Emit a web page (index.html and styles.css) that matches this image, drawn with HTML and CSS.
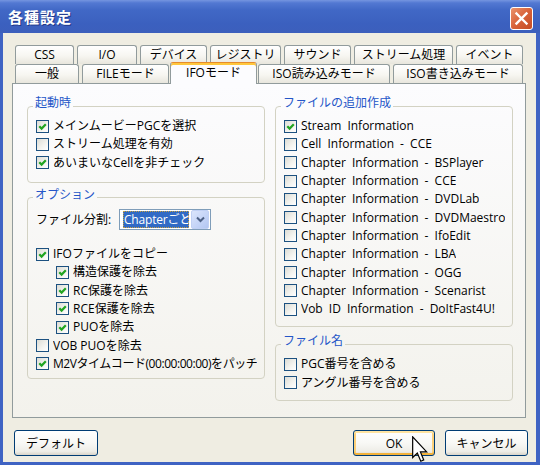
FILE: index.html
```html
<!DOCTYPE html>
<html lang="ja">
<head>
<meta charset="utf-8">
<link rel="stylesheet" href="styles.css">
</head>
<body>
<div class="window">
  <div class="titlebar">
    <span class="title">各種設定</span>
    <span class="close"><svg width="15" height="15" viewBox="0 0 15 15"><path d="M2.5 2.5 L12.5 12.5 M12.5 2.5 L2.5 12.5" stroke="#fff" stroke-width="2.4" stroke-linecap="square"/></svg></span>
  </div>
  <div class="client">
    <div class="tabs">
      <div class="tabrow row1">
        <div class="tab">CSS</div>
        <div class="tab">I/O</div>
        <div class="tab">デバイス</div>
        <div class="tab">レジストリ</div>
        <div class="tab">サウンド</div>
        <div class="tab">ストリーム処理</div>
        <div class="tab">イベント</div>
      </div>
      <div class="tabrow row2">
        <div class="tab">一般</div>
        <div class="tab">FILEモード</div>
        <div class="tab active">IFOモード</div>
        <div class="tab">ISO読み込みモード</div>
        <div class="tab">ISO書き込みモード</div>
      </div>
    </div>
    <div class="panel">
      <div class="col">
        <fieldset class="group g-start">
          <legend>起動時</legend>
          <div class="cb"><span class="box on"><svg viewBox="0 0 11 11"><path d="M2.3 5.2 L4.6 7.6 L8.8 3.2" /></svg></span><span class="txt">メインムービーPGCを選択</span></div>
          <div class="cb"><span class="box"></span><span class="txt">ストリーム処理を有効</span></div>
          <div class="cb"><span class="box on"><svg viewBox="0 0 11 11"><path d="M2.3 5.2 L4.6 7.6 L8.8 3.2" /></svg></span><span class="txt">あいまいなCellを非チェック</span></div>
        </fieldset>
        <fieldset class="group g-option">
          <legend>オプション</legend>
          <div class="split-row">
            <span class="split-label">ファイル分割:</span>
            <div class="combo">
              <span class="combo-sel">Chapterごと</span>
              <span class="combo-btn"><svg width="9" height="7" viewBox="0 0 9 7"><path d="M1 1.5 L4.5 5 L8 1.5" fill="none" stroke="#4d6185" stroke-width="2"/></svg></span>
            </div>
          </div>
          <div class="cb"><span class="box on"><svg viewBox="0 0 11 11"><path d="M2.3 5.2 L4.6 7.6 L8.8 3.2" /></svg></span><span class="txt">IFOファイルをコピー</span></div>
          <div class="cb sub"><span class="box on"><svg viewBox="0 0 11 11"><path d="M2.3 5.2 L4.6 7.6 L8.8 3.2" /></svg></span><span class="txt">構造保護を除去</span></div>
          <div class="cb sub"><span class="box on"><svg viewBox="0 0 11 11"><path d="M2.3 5.2 L4.6 7.6 L8.8 3.2" /></svg></span><span class="txt">RC保護を除去</span></div>
          <div class="cb sub"><span class="box on"><svg viewBox="0 0 11 11"><path d="M2.3 5.2 L4.6 7.6 L8.8 3.2" /></svg></span><span class="txt">RCE保護を除去</span></div>
          <div class="cb sub"><span class="box on"><svg viewBox="0 0 11 11"><path d="M2.3 5.2 L4.6 7.6 L8.8 3.2" /></svg></span><span class="txt">PUOを除去</span></div>
          <div class="cb"><span class="box"></span><span class="txt">VOB PUOを除去</span></div>
          <div class="cb"><span class="box on"><svg viewBox="0 0 11 11"><path d="M2.3 5.2 L4.6 7.6 L8.8 3.2" /></svg></span><span class="txt tight">M2Vタイムコード(00:00:00:00)をパッチ</span></div>
        </fieldset>
      </div>
      <div class="col">
        <fieldset class="group g-files">
          <legend>ファイルの追加作成</legend>
          <div class="cb"><span class="box on"><svg viewBox="0 0 11 11"><path d="M2.3 5.2 L4.6 7.6 L8.8 3.2" /></svg></span><span class="txt latin">Stream Information</span></div>
          <div class="cb"><span class="box"></span><span class="txt latin">Cell Information - CCE</span></div>
          <div class="cb"><span class="box"></span><span class="txt latin">Chapter Information - BSPlayer</span></div>
          <div class="cb"><span class="box"></span><span class="txt latin">Chapter Information - CCE</span></div>
          <div class="cb"><span class="box"></span><span class="txt latin">Chapter Information - DVDLab</span></div>
          <div class="cb"><span class="box"></span><span class="txt latin">Chapter Information - DVDMaestro</span></div>
          <div class="cb"><span class="box"></span><span class="txt latin">Chapter Information - IfoEdit</span></div>
          <div class="cb"><span class="box"></span><span class="txt latin">Chapter Information - LBA</span></div>
          <div class="cb"><span class="box"></span><span class="txt latin">Chapter Information - OGG</span></div>
          <div class="cb"><span class="box"></span><span class="txt latin">Chapter Information - Scenarist</span></div>
          <div class="cb"><span class="box"></span><span class="txt latin">Vob ID Information - DoItFast4U!</span></div>
        </fieldset>
        <fieldset class="group g-name">
          <legend>ファイル名</legend>
          <div class="cb"><span class="box"></span><span class="txt">PGC番号を含める</span></div>
          <div class="cb"><span class="box"></span><span class="txt">アングル番号を含める</span></div>
        </fieldset>
      </div>
    </div>
    <div class="buttons">
      <div class="btn btn-default">デフォルト</div>
      <div class="btn btn-ok">OK</div>
      <div class="btn btn-cancel">キャンセル</div>
    </div>
  </div>
  <svg class="cursor" width="16" height="27" viewBox="0 0 12 20"><path d="M0.5 0.5 L0.5 16 L4 12.6 L6.6 18.8 L8.8 17.8 L6.3 11.8 L11 11.8 Z" fill="#fff" stroke="#000" stroke-width="0.9" stroke-linejoin="miter"/></svg>
</div>
</body>
</html>
```
FILE: styles.css
```css
* { box-sizing: border-box; }
html, body { margin: 0; padding: 0; }
body {
  width: 540px;
  height: 465px;
  overflow: hidden;
  font-family: "Open Sans", "Noto Sans CJK JP", sans-serif;
  font-size: 12px;
  color: #000;
}
.window {
  position: relative;
  width: 540px;
  height: 465px;
  background: #3f63c3;
  display: flex;
  flex-direction: column;
}
.titlebar {
  height: 33px;
  flex: none;
  display: flex;
  align-items: center;
  justify-content: space-between;
  padding: 0 7px 0 8px;
  background: linear-gradient(#7595e0 0, #5278d2 3px, #4168c6 10px, #3b60bf 24px, #3c5fbc 33px);
}
.title {
  color: #fff;
  font-family: "Noto Sans CJK JP", sans-serif;
  font-weight: bold;
  font-size: 15px;
  letter-spacing: 1px;
  text-shadow: 1px 1px 0 #22398a;
}
.close {
  width: 23px;
  height: 23px;
  margin-top: 4px;
  border: 1px solid #fff;
  border-radius: 3px;
  background: linear-gradient(135deg, #eb936c, #d8623a 50%, #c44c24);
  display: flex;
  align-items: center;
  justify-content: center;
}
.client {
  flex: 1;
  margin: 0 4px 3px 3px;
  background: #efede2;
  padding: 12px 10px 0 9px;
  display: flex;
  flex-direction: column;
}
.tabs { margin: 0 3px; }
.tabrow {
  display: grid;
  column-gap: 3px;
  height: 19px;
}
.row1 { grid-template-columns: 59px 60px 67px 71px 67px 99px 67px; }
.row2 { grid-template-columns: 64px 87px 83px 132px 130px; }
.tab {
  border: 1px solid #919b9c;
  border-bottom: 0;
  border-radius: 3px 3px 0 0;
  background: linear-gradient(#ffffff, #f7f6f1 55%, #e8e6dd);
  display: flex;
  align-items: center;
  justify-content: center;
  white-space: nowrap;
  line-height: 1;
}
.tab.active {
  position: relative;
  z-index: 1;
  margin: -2px -2px -1px;
  background: #fcfcfe;
  border-top: 1px solid #e68b2c;
  box-shadow: inset 0 2px 0 #ffc73c;
  padding-bottom: 2px;
}
.panel {
  height: 335px;
  flex: none;
  border: 1px solid #919b9c;
  background: linear-gradient(#fcfcfe, #f3f2ec);
  padding: 12px 12px 0 14px;
  display: flex;
  gap: 10px;
}
.col {
  width: 238px;
  display: flex;
  flex-direction: column;
}
.group {
  margin: 0;
  padding: 1px 7px 10px 8px;
  border: 1px solid #d3d2c3;
  border-radius: 4px;
  min-width: 0;
}
.group legend {
  padding: 0 2px 6px;
  margin-left: -3px;
  color: #2456c8;
  line-height: 14px;
  font-size: 12px;
}
.g-start { padding-bottom: 10px; }
.g-option { margin-top: 5px; padding-bottom: 5px; }
.g-files { padding-bottom: 8px; }
.g-name { margin-top: 7px; padding-bottom: 8px; }
.cb {
  display: flex;
  align-items: center;
  height: 18.3px;
  white-space: nowrap;
}
.cb.sub { padding-left: 20px; }
.box {
  flex: none;
  width: 13px;
  height: 13px;
  border: 1px solid #1c5180;
  background: linear-gradient(135deg, #dcdcd5, #f4f4f0 60%, #ffffff);
  margin-right: 4px;
  display: flex;
  align-items: center;
  justify-content: center;
}
.box svg { width: 11px; height: 11px; }
.box svg path {
  fill: none;
  stroke: #21a421;
  stroke-width: 2.2;
}
.txt {
  overflow: hidden;
  min-width: 0;
  line-height: 16px;
}
.txt.latin { word-spacing: 3px; }
.txt.tight { letter-spacing: -0.45px; }
.split-row {
  display: flex;
  align-items: center;
  height: 21px;
  margin-bottom: 15px;
}
.split-label { width: 83px; flex: none; }
.combo {
  width: 92px;
  height: 21px;
  border: 1px solid #7f9db9;
  background: #fff;
  display: flex;
  align-items: center;
  padding: 0 1px 0 3px;
}
.combo-sel {
  width: 66px;
  height: 17px;
  flex: none;
  overflow: hidden;
  white-space: nowrap;
  background: #316ac5;
  color: #fff;
  outline: 1px dotted #c8a040;
  outline-offset: -1px;
  padding-left: 1px;
  line-height: 17px;
  letter-spacing: -0.2px;
}
.combo-btn {
  width: 18px;
  height: 19px;
  margin-left: auto;
  border-radius: 2px;
  border: 1px solid #c0d0f4;
  background: linear-gradient(135deg, #dbe5fb, #c3d3f7 60%, #b2c6f2);
  display: flex;
  align-items: center;
  justify-content: center;
}
.buttons {
  display: flex;
  margin: 12px -2px 0 2px;
  height: 26px;
}
.btn {
  height: 26px;
  border: 1px solid #003c74;
  border-radius: 3px;
  background: linear-gradient(#ffffff, #f8f8f5 50%, #eeede7 85%, #d9d4c9);
  display: flex;
  align-items: center;
  justify-content: center;
}
.btn-default { width: 84px; }
.btn-ok {
  width: 82px;
  margin-left: auto;
  box-shadow: inset 0 2px 0 #ffe4a2, inset 0 -2px 0 #f3b23a, inset 2px 0 0 #fbd07a, inset -2px 0 0 #fbd07a;
}
.btn-cancel { width: 83px; margin-left: 10px; }
.cursor {
  position: absolute;
  left: 412px;
  top: 436px;
}
```
